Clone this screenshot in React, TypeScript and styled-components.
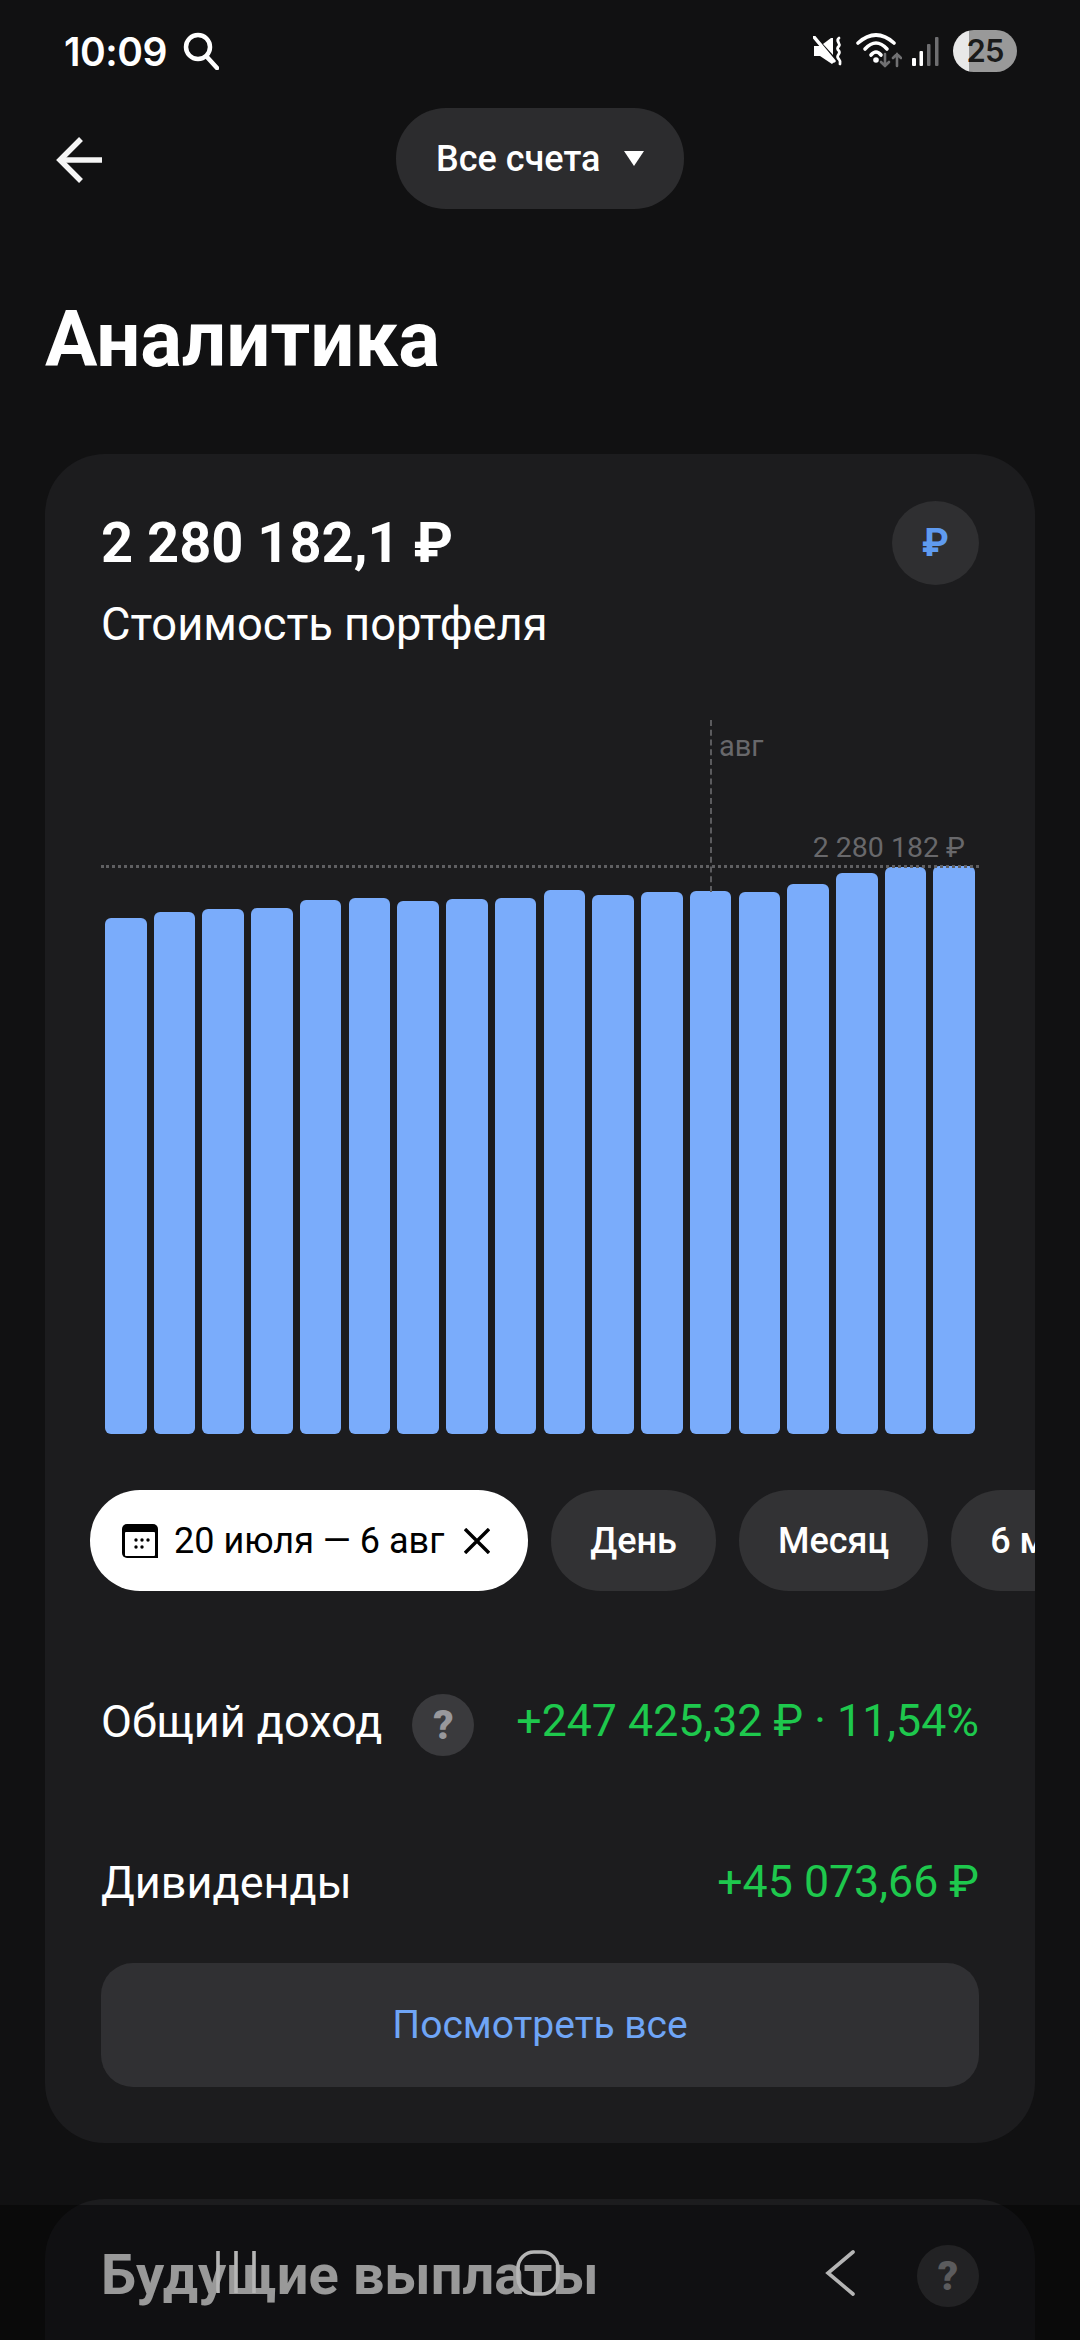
import React from "react";
import styled, { createGlobalStyle } from "styled-components";

const GlobalStyle = createGlobalStyle`
  html, body {
    margin: 0;
    padding: 0;
    background: #111112;
  }
  * {
    box-sizing: border-box;
  }
`;

const Screen = styled.div`
  position: relative;
  width: 1080px;
  height: 2340px;
  overflow: hidden;
  background: #111112;
  color: #fff;
  font-family: Roboto, "Liberation Sans", sans-serif;
`;

const StatusBar = styled.div`
  height: 100px;
  padding: 2px 63px 0 64px;
  display: flex;
  align-items: center;
  justify-content: space-between;
`;

const StatusLeft = styled.div`
  display: flex;
  align-items: center;
  gap: 16px;
`;

const Clock = styled.span`
  font-family: Inter, sans-serif;
  font-size: 39px;
  font-weight: 600;
  letter-spacing: -0.5px;
`;

const StatusRight = styled.div`
  display: flex;
  align-items: center;
`;

const Battery = styled.div`
  width: 64px;
  height: 42px;
  margin-left: 14px;
  border-radius: 21px;
  background: linear-gradient(90deg, #e8e8e8 0 16px, #999 16px);
  color: #1a1a1a;
  font-family: Inter, sans-serif;
  font-size: 31px;
  font-weight: 600;
  letter-spacing: -1px;
  line-height: 42px;
  text-align: center;
`;

const TopBar = styled.div`
  position: relative;
  height: 109px;
  margin-top: 8px;
  display: flex;
  justify-content: center;
`;

const BackButton = styled.button`
  position: absolute;
  left: 56px;
  top: 29px;
  padding: 0;
  border: 0;
  background: none;
  display: flex;
`;

const AccountPill = styled.div`
  width: 288px;
  height: 101px;
  padding-left: 40px;
  border-radius: 50px;
  background: #2c2c2e;
  display: flex;
  align-items: center;
  gap: 24px;
  font-size: 36px;
  font-weight: 500;
`;

const Caret = styled.span`
  width: 0;
  height: 0;
  border-left: 10px solid transparent;
  border-right: 10px solid transparent;
  border-top: 15px solid #fff;
`;

const PageTitle = styled.h1`
  margin: 78px 0 0 45px;
  font-size: 78px;
  font-weight: 700;
  line-height: 90px;
`;

const Card = styled.section`
  margin: 0 45px;
  border-radius: 60px 60px 0 0;
  background: #1c1c1e;
  overflow: hidden;
`;

const MainCard = styled(Card)`
  margin-top: 69px;
  padding: 47px 56px 56px;
  border-radius: 60px;
`;

const CardHead = styled.div`
  height: 84px;
  display: flex;
  align-items: center;
  justify-content: space-between;
`;

const Total = styled.div`
  font-size: 56px;
  font-weight: 700;
`;

const CurrencyBadge = styled.div`
  width: 87px;
  height: 84px;
  border-radius: 50%;
  background: #2f2f31;
  color: #5f9bf0;
  font-size: 38px;
  font-weight: 700;
  display: flex;
  align-items: center;
  justify-content: center;
`;

const Subtitle = styled.div`
  margin-top: 15px;
  font-size: 45.3px;
  line-height: 50px;
`;

const Chart = styled.div`
  position: relative;
  height: 714px;
  margin-top: 70px;
`;

const Bars = styled.div`
  height: 100%;
  padding: 0 4px;
  display: flex;
  align-items: flex-end;
  justify-content: space-between;
`;

const Bar = styled.div<{ $height: number }>`
  width: 41.5px;
  height: ${(p) => p.$height}px;
  border-radius: 6px;
  background: #7aacfb;
`;

const LevelLine = styled.div`
  position: absolute;
  left: 0;
  right: 0;
  top: 145px;
  border-top: 3px dotted #5f5f62;
`;

const MonthLine = styled.div`
  position: absolute;
  left: 609px;
  top: 0;
  height: 172px;
  border-left: 2px dashed #5b5b5e;
`;

const MonthLabel = styled.span`
  position: absolute;
  left: 618px;
  top: 9px;
  color: #68686b;
  font-size: 29px;
  line-height: 34px;
`;

const LevelLabel = styled.span`
  position: absolute;
  right: 14px;
  top: 111px;
  color: #68686b;
  font-size: 28.5px;
  line-height: 34px;
`;

const Chips = styled.div`
  margin: 56px -56px 0 -11px;
  display: flex;
  gap: 23px;
  overflow: hidden;
`;

const Chip = styled.div<{ $active?: boolean }>`
  flex: none;
  height: 101px;
  padding: 0 39px;
  border-radius: 50px;
  background: ${(p) => (p.$active ? "#fff" : "#323234")};
  color: ${(p) => (p.$active ? "#000" : "#fff")};
  display: flex;
  align-items: center;
  font-size: 36px;
  font-weight: ${(p) => (p.$active ? 400 : 500)};
`;

const DateChip = styled(Chip)`
  padding: 0 38px 0 31px;
  gap: 15px;
`;

const Row = styled.div`
  height: 62px;
  margin-top: 99px;
  display: flex;
  align-items: center;
  font-size: 45px;
`;

const Amount = styled.span`
  margin-left: auto;
  color: #1ec84d;
  font-size: 44.7px;
`;

const HelpDot = styled.span`
  width: 62px;
  height: 62px;
  border-radius: 50%;
  background: #3a3a3d;
  color: #98989c;
  font-size: 40px;
  font-weight: 900;
  display: flex;
  align-items: center;
  justify-content: center;
`;

const RowHelp = styled(HelpDot)`
  margin: 8px 0 0 30px;
`;

const MoreButton = styled.div`
  height: 124px;
  margin-top: 50px;
  border-radius: 32px;
  background: #303033;
  color: #6fa5f6;
  font-size: 39px;
  display: flex;
  align-items: center;
  justify-content: center;
`;

const NextCard = styled(Card)`
  margin-top: 56px;
  height: 300px;
  padding: 46px 56px 0;
  display: flex;
  justify-content: space-between;
`;

const NextTitle = styled.div`
  font-size: 56px;
  font-weight: 700;
  line-height: 60px;
`;

const NavBar = styled.nav`
  position: absolute;
  left: 0;
  right: 0;
  bottom: 0;
  height: 135px;
  padding: 45px 0 0 85px;
  background: rgba(0, 0, 0, 0.4);
  display: grid;
  grid-template-columns: repeat(3, 302px);
  align-items: start;
  justify-items: center;
`;

const barHeights = [
  516, 522, 525, 526, 534, 536, 533, 535, 536, 544, 539, 542, 543, 542, 550, 561,
  567, 568,
];

function SearchIcon() {
  return (
    <svg width="36" height="38" viewBox="0 0 36 38" fill="none" stroke="#fff" strokeWidth="4.5" strokeLinecap="round">
      <circle cx="15" cy="15" r="12" />
      <path d="M24 25l10 11" />
    </svg>
  );
}

function MuteIcon() {
  return (
    <svg width="30" height="30" viewBox="0 0 30 30" fill="none">
      <path d="M1 10h6l14 16-2 2-9-6-3-2H1z" fill="#fff" />
      <path d="M10 8l8-6h2v17z" fill="#fff" />
      <path d="M1 1l20 24" stroke="#fff" strokeWidth="3.4" strokeLinecap="round" />
      <path
        d="M26 2c-4 3 2 5 0 8-2 2-2 3 0 5 2 3-3 4-1 7 1 2 3 2 2 6"
        stroke="#fff"
        strokeWidth="2.8"
        strokeLinecap="round"
      />
    </svg>
  );
}

function WifiIcon() {
  return (
    <svg width="46" height="36" viewBox="0 0 46 36" fill="none" strokeLinecap="round" style={{ marginLeft: 13 }}>
      <g stroke="#fff" strokeWidth="3.6">
        <path d="M2 10Q20-6 38 10" />
        <path d="M9 16Q20 4 31 16" />
        <path d="M15 22Q20 16 25 22" />
      </g>
      <circle cx="20" cy="27" r="2.8" fill="#fff" />
      <path d="M29 21v12m-4-4l4 4 4-4" stroke="#707072" strokeWidth="2.6" />
      <path d="M41 33V21m-4 4l4-4 4 4" stroke="#707072" strokeWidth="2.6" />
    </svg>
  );
}

function SignalIcon() {
  return (
    <svg width="27" height="29" viewBox="0 0 27 29" style={{ marginLeft: 10 }}>
      <rect x="0" y="21" width="4" height="8" rx="1" fill="#fff" />
      <rect x="7.5" y="14" width="3.5" height="15" rx="1" fill="#fff" />
      <rect x="15" y="7" width="3.5" height="22" rx="1" fill="#6e6e70" />
      <rect x="23" y="0" width="3.5" height="29" rx="1" fill="#6e6e70" />
    </svg>
  );
}

function BackArrow() {
  return (
    <svg width="46" height="46" viewBox="0 0 46 46" fill="none" stroke="#f5f5f5" strokeWidth="5.5">
      <path d="M46 23H4" />
      <path d="M25 2L4 23l21 21" />
    </svg>
  );
}

function CalendarIcon() {
  return (
    <svg width="38" height="36" viewBox="0 0 38 36" fill="none">
      <path
        d="M6 1h26a5 5 0 0 1 5 5v29H6a5 5 0 0 1-5-5V6a5 5 0 0 1 5-5z"
        fill="#000"
      />
      <rect x="4" y="9" width="30" height="24" rx="1" fill="#fff" />
      <g fill="#000">
        <circle cx="15" cy="17" r="1.7" />
        <circle cx="21" cy="17" r="1.7" />
        <circle cx="27" cy="17" r="1.7" />
        <circle cx="15" cy="24" r="1.7" />
        <circle cx="21" cy="24" r="1.7" />
      </g>
    </svg>
  );
}

function CloseIcon() {
  return (
    <svg width="26" height="26" viewBox="0 0 26 26" fill="none" stroke="#000" strokeWidth="3.4" style={{ marginLeft: 5 }}>
      <path d="M1 1l24 24M25 1L1 25" />
    </svg>
  );
}

function RecentsIcon() {
  return (
    <svg width="44" height="44" viewBox="0 0 44 44" stroke="#b5b5b5" strokeWidth="3.6">
      <path d="M4 1v42M22 1v42M40 1v42" />
    </svg>
  );
}

function HomeIcon() {
  return (
    <svg width="44" height="46" viewBox="0 0 44 46" fill="none" stroke="#b5b5b5" strokeWidth="3.6">
      <rect x="2" y="2" width="40" height="42" rx="16" />
    </svg>
  );
}

function NavBackIcon() {
  return (
    <svg width="30" height="46" viewBox="0 0 30 46" fill="none" stroke="#b5b5b5" strokeWidth="3.6" strokeLinecap="round">
      <path d="M28 2L3 23l25 21" />
    </svg>
  );
}

export default function App() {
  return (
    <Screen>
      <GlobalStyle />
      <StatusBar>
        <StatusLeft>
          <Clock>10:09</Clock>
          <SearchIcon />
        </StatusLeft>
        <StatusRight>
          <MuteIcon />
          <WifiIcon />
          <SignalIcon />
          <Battery>25</Battery>
        </StatusRight>
      </StatusBar>

      <TopBar>
        <BackButton>
          <BackArrow />
        </BackButton>
        <AccountPill>
          Все счета
          <Caret />
        </AccountPill>
      </TopBar>

      <PageTitle>Аналитика</PageTitle>

      <MainCard>
        <CardHead>
          <Total>2 280 182,1 ₽</Total>
          <CurrencyBadge>₽</CurrencyBadge>
        </CardHead>
        <Subtitle>Стоимость портфеля</Subtitle>

        <Chart>
          <Bars>
            {barHeights.map((h, i) => (
              <Bar key={i} $height={h} />
            ))}
          </Bars>
          <LevelLine />
          <MonthLine />
          <MonthLabel>авг</MonthLabel>
          <LevelLabel>2 280 182 ₽</LevelLabel>
        </Chart>

        <Chips>
          <DateChip $active>
            <CalendarIcon />
            20 июля — 6 авг
            <CloseIcon />
          </DateChip>
          <Chip>День</Chip>
          <Chip>Месяц</Chip>
          <Chip>6 месяцев</Chip>
        </Chips>

        <Row>
          Общий доход
          <RowHelp>?</RowHelp>
          <Amount>+247 425,32 ₽ · 11,54%</Amount>
        </Row>
        <Row>
          Дивиденды
          <Amount>+45 073,66 ₽</Amount>
        </Row>
        <MoreButton>Посмотреть все</MoreButton>
      </MainCard>

      <NextCard>
        <NextTitle>Будущие выплаты</NextTitle>
        <HelpDot>?</HelpDot>
      </NextCard>

      <NavBar>
        <RecentsIcon />
        <HomeIcon />
        <NavBackIcon />
      </NavBar>
    </Screen>
  );
}
